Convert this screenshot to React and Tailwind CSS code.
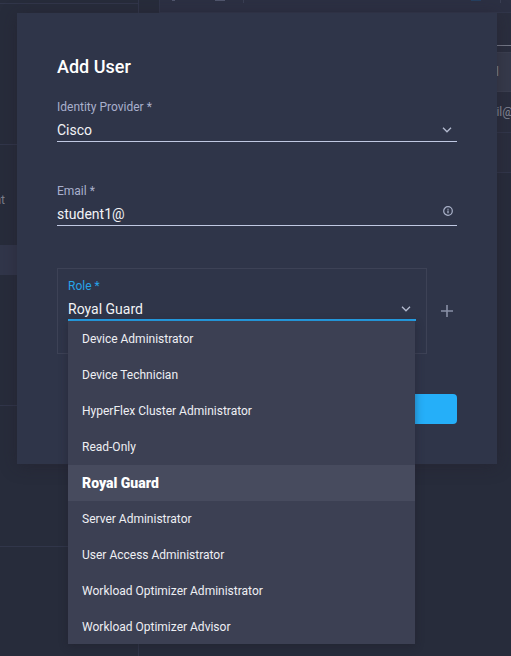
import { useState } from "react";

const ROLES = [
  "Device Administrator",
  "Device Technician",
  "HyperFlex Cluster Administrator",
  "Read-Only",
  "Royal Guard",
  "Server Administrator",
  "User Access Administrator",
  "Workload Optimizer Administrator",
  "Workload Optimizer Advisor",
];

function Chevron() {
  return (
    <svg viewBox="0 0 10 6" className="h-1.5 w-2.5" fill="none" stroke="#b4bbd0" strokeWidth="1.3" aria-hidden="true">
      <path d="M1 0.8 L5 4.8 L9 0.8" />
    </svg>
  );
}

function InfoIcon() {
  return (
    <svg viewBox="0 0 10 10" className="size-2.5" fill="none" stroke="#a9b1c8" aria-hidden="true">
      <circle cx="5" cy="5" r="4.3" strokeWidth="1.2" />
      <path d="M5 4.4 V7.3 M5 2.7 V3.7" strokeWidth="1.3" />
    </svg>
  );
}

/* Dimmed application page behind the dialog */
function Backdrop() {
  return (
    <div className="flex min-h-screen" aria-hidden="true">
      <div className="flex w-[139px] shrink-0 flex-col border-r border-[#31364a]">
        <div className="h-1 border-b border-[#31364a]" />
        <div className="h-[141px] border-b border-[#31364a]" />
        <div className="flex h-[100px] items-center pt-2.5 text-[12px] leading-4 text-[#7b7f8c]">
          <span className="flex w-[5px] justify-end whitespace-nowrap">nt</span>
        </div>
        <div className="h-[30px] bg-[#31364a]" />
        <div className="h-[131px] border-b border-[#31364a]" />
        <div className="h-[141px] border-b border-[#31364a]" />
      </div>
      <div className="ml-5 flex min-w-0 flex-1 flex-col">
        <div className="flex h-[13px] items-start border-b border-l border-[#31364a] bg-[#2c3043]">
          <div className="ml-3 h-px w-[3px] bg-[#50566d]" />
          <div className="ml-10 h-px w-2.5 bg-[#50566d]" />
          <div className="ml-[18px] h-[3px] w-px bg-[#3a3f53]" />
          <div className="ml-auto h-px w-2.5 bg-[#263f60]" />
          <div className="mr-2.5 ml-[19px] h-[3px] w-px bg-[#3a3f53]" />
        </div>
        <div className="h-[33px] border-b border-[#747887] bg-[#2a2e3e]" />
        <div className="h-1.5 bg-[#2a2e3e]" />
        <div className="flex h-10 items-center justify-end border-y border-[#3b3f50] bg-[#363a4b] pr-3 text-[12px] leading-4 text-[#868a98]">
          Email
        </div>
        <div className="flex h-[41px] items-center justify-end border-b border-[#31364a] bg-[#2a2e3e] text-[12px] leading-4 text-[#868a98]">
          <span className="-mr-0.5">email@</span>
        </div>
        <div className="h-10 border-b border-[#31364a] bg-[#2a2e3e]" />
      </div>
    </div>
  );
}

export default function App() {
  const [provider, setProvider] = useState("Cisco");
  const [email, setEmail] = useState("student1@");
  const [role, setRole] = useState("Royal Guard");

  return (
    <div className="relative min-h-screen overflow-hidden bg-[#272c3b] font-[Roboto,sans-serif]">
      <Backdrop />
      <div className="absolute inset-0 pt-[13px] pr-3.5 pl-[17px]">
        <form
          role="dialog"
          aria-labelledby="dialog-title"
          onSubmit={(e) => e.preventDefault()}
          className="mx-auto flex max-w-[480px] flex-col bg-[#2f3549] p-10 shadow-[0_2px_16px_rgba(36,28,40,0.4)]"
        >
          <h1 id="dialog-title" className="text-[18px] leading-7 font-medium text-white">
            Add User
          </h1>

          <div className="mt-[18px]">
            <label htmlFor="provider" className="block text-[12px] leading-4 text-[#a9b0cd]">
              Identity Provider *
            </label>
            <div className="mt-1 flex h-[23px] items-center border-b border-[#c0c8e2] pr-[5px]">
              <select
                id="provider"
                value={provider}
                onChange={(e) => setProvider(e.target.value)}
                className="min-w-0 flex-1 appearance-none bg-transparent text-[14px] leading-5 text-[#f2f3f6] outline-none"
              >
                <option>Cisco</option>
              </select>
              <Chevron />
            </div>
          </div>

          <div className="mt-[41px]">
            <label htmlFor="email" className="block text-[12px] leading-4 text-[#a9b0cd]">
              Email *
            </label>
            <div className="mt-1 flex h-[23px] items-center border-b border-[#c0c8e2] pr-1">
              <input
                id="email"
                type="text"
                value={email}
                onChange={(e) => setEmail(e.target.value)}
                className="min-w-0 flex-1 bg-transparent text-[14px] leading-5 text-[#f2f3f6] outline-none"
              />
              <span className="mb-1.5">
                <InfoIcon />
              </span>
            </div>
          </div>

          <div className="mt-[42px] flex items-center gap-2.5">
            <div className="h-[86px] min-w-0 flex-1 border border-[#3d4256] px-2.5 pt-[9px]">
              <label htmlFor="role" className="block text-[12px] leading-4 text-[#27a4e8]">
                Role *
              </label>
              <div className="relative mt-1">
                <div className="flex h-[23px] items-center border-b-2 border-[#25a5ee] pr-[5px]">
                  <select
                    id="role"
                    value={role}
                    onChange={(e) => setRole(e.target.value)}
                    className="min-w-0 flex-1 appearance-none bg-transparent text-[14px] leading-5 text-[#f2f3f6] outline-none"
                  >
                    {ROLES.map((name) => (
                      <option key={name}>{name}</option>
                    ))}
                  </select>
                  <Chevron />
                </div>
                <ul className="absolute top-full right-px left-0 z-10 max-h-[323px] overflow-hidden bg-[#3c4053] shadow-[0_2px_8px_rgba(30,28,40,0.45)]">
                  {ROLES.map((name) => (
                    <li key={name}>
                      <button
                        type="button"
                        onClick={() => setRole(name)}
                        className={
                          name === role
                            ? "block h-9 w-full bg-[#474b5e] px-3.5 text-left text-[14px] leading-4 font-black text-white"
                            : "block h-9 w-full px-3.5 text-left text-[12px] leading-4 text-[#eeeff3]"
                        }
                      >
                        {name}
                      </button>
                    </li>
                  ))}
                </ul>
              </div>
            </div>
            <button type="button" aria-label="Add role" className="flex size-5 items-center justify-center">
              <svg viewBox="0 0 12 12" className="size-3" stroke="#8990a6" strokeWidth="1.6" aria-hidden="true">
                <path d="M6 0 V12 M0 6 H12" />
              </svg>
            </button>
          </div>

          <button
            type="submit"
            aria-label="Save"
            className="mt-10 h-[30px] w-[120px] self-end rounded bg-[#25aff9]"
          />
        </form>
      </div>
    </div>
  );
}
